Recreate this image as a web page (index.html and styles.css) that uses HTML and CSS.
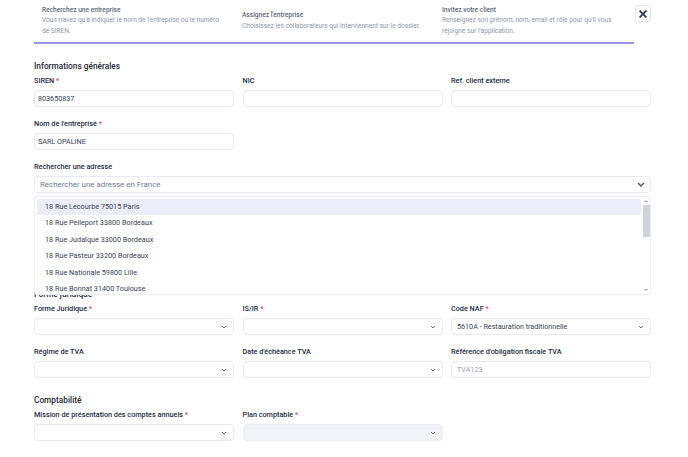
FILE: index.html
```html
<!DOCTYPE html>
<html lang="fr">
<head>
<meta charset="utf-8">
<title>Nouvelle entreprise</title>
<link rel="stylesheet" href="styles.css">
</head>
<body>
<div class="page">
  <header class="top">
    <div class="steps">
      <div class="step">
        <div class="step-title">Recherchez une entreprise</div>
        <div class="step-desc">Vous n'avez qu'à indiquer le nom de l'entreprise ou le numéro<br>de SIREN.</div>
      </div>
      <div class="step">
        <div class="step-title">Assignez l'entreprise</div>
        <div class="step-desc">Choisissez les collaborateurs qui interviennent sur le dossier.</div>
      </div>
      <div class="step">
        <div class="step-title">Invitez votre client</div>
        <div class="step-desc">Renseignez son prénom, nom, email et rôle pour qu'il vous rejoigne sur l'application.</div>
      </div>
    </div>
    <button class="close" type="button" aria-label="Fermer">
      <svg width="8" height="8" viewBox="0 0 8 8"><path d="M1.2 1.2L6.8 6.8M6.8 1.2L1.2 6.8" stroke="#2e3850" stroke-width="1.8" stroke-linecap="square"/></svg>
    </button>
  </header>

  <main class="form">
    <section class="section">
      <h2 class="section-title">Informations générales</h2>
      <div class="grid">
        <div class="field">
          <label class="label">SIREN <span class="req">*</span></label>
          <div class="input filled">803650837</div>
        </div>
        <div class="field">
          <label class="label">NIC</label>
          <div class="input"></div>
        </div>
        <div class="field">
          <label class="label">Ref. client externe</label>
          <div class="input"></div>
        </div>
        <div class="field">
          <label class="label">Nom de l'entreprise <span class="req">*</span></label>
          <div class="input filled">SARL OPALINE</div>
        </div>
        <div class="field full search">
          <label class="label">Rechercher une adresse</label>
          <div class="input select search-input">
            <span class="placeholder search-ph">Rechercher une adresse en France</span>
            <svg class="chev-big" width="8" height="5" viewBox="0 0 8 5"><path d="M1 1L4 4L7 1" fill="none" stroke="#4b5563" stroke-width="1.4"/></svg>
          </div>
          <div class="dropdown">
            <div class="options">
              <div class="option active">18 Rue Lecourbe 75015 Paris</div>
              <div class="option">18 Rue Pelleport 33800 Bordeaux</div>
              <div class="option">18 Rue Judaïque 33000 Bordeaux</div>
              <div class="option">18 Rue Pasteur 33200 Bordeaux</div>
              <div class="option">18 Rue Nationale 59800 Lille</div>
              <div class="option">18 Rue Bonnat 31400 Toulouse</div>
              <div class="option">18 Rue Lafayette 75009 Paris</div>
            </div>
            <div class="scrollbar">
              <span class="arrow up"></span>
              <div class="track"><div class="thumb"></div></div>
              <span class="arrow down"></span>
            </div>
          </div>
        </div>
        <div class="field full">
          <label class="label">Adresse</label>
          <div class="input tall"></div>
        </div>
      </div>
    </section>

    <section class="section">
      <h2 class="section-title">Forme juridique</h2>
      <div class="grid">
        <div class="field">
          <label class="label">Forme Juridique <span class="req">*</span></label>
          <div class="input select"><span></span><svg class="chev" width="6" height="4" viewBox="0 0 6 4"><path d="M1 1L3 3L5 1" fill="none" stroke="#6b7280" stroke-width="1"/></svg></div>
        </div>
        <div class="field">
          <label class="label">IS/IR <span class="req">*</span></label>
          <div class="input select"><span></span><svg class="chev" width="6" height="4" viewBox="0 0 6 4"><path d="M1 1L3 3L5 1" fill="none" stroke="#6b7280" stroke-width="1"/></svg></div>
        </div>
        <div class="field">
          <label class="label">Code NAF <span class="req">*</span></label>
          <div class="input select"><span>5610A - Restauration traditionnelle</span><svg class="chev" width="6" height="4" viewBox="0 0 6 4"><path d="M1 1L3 3L5 1" fill="none" stroke="#6b7280" stroke-width="1"/></svg></div>
        </div>
        <div class="field">
          <label class="label">Régime de TVA</label>
          <div class="input select"><span></span><svg class="chev" width="6" height="4" viewBox="0 0 6 4"><path d="M1 1L3 3L5 1" fill="none" stroke="#6b7280" stroke-width="1"/></svg></div>
        </div>
        <div class="field">
          <label class="label">Date d'échéance TVA</label>
          <div class="input select"><span></span><svg class="chev" width="6" height="4" viewBox="0 0 6 4"><path d="M1 1L3 3L5 1" fill="none" stroke="#6b7280" stroke-width="1"/></svg></div>
        </div>
        <div class="field">
          <label class="label">Référence d'obligation fiscale TVA</label>
          <div class="input"><span class="placeholder light">TVA123</span></div>
        </div>
      </div>
    </section>

    <section class="section">
      <h2 class="section-title">Comptabilité</h2>
      <div class="grid">
        <div class="field">
          <label class="label">Mission de présentation des comptes annuels <span class="req">*</span></label>
          <div class="input select"><span></span><svg class="chev" width="6" height="4" viewBox="0 0 6 4"><path d="M1 1L3 3L5 1" fill="none" stroke="#6b7280" stroke-width="1"/></svg></div>
        </div>
        <div class="field">
          <label class="label">Plan comptable <span class="req">*</span></label>
          <div class="input select disabled"><span></span><svg class="chev" width="6" height="4" viewBox="0 0 6 4"><path d="M1 1L3 3L5 1" fill="none" stroke="#6b7280" stroke-width="1"/></svg></div>
        </div>
      </div>
    </section>
  </main>
</div>
</body>
</html>
```

FILE: styles.css
```css
* { box-sizing: border-box; }

html, body {
  margin: 0;
  padding: 0;
  background: #ffffff;
}

body {
  font-family: Roboto, "Liberation Sans", sans-serif;
  color: #1f2937;
  width: 688px;
  height: 457px;
  overflow: hidden;
}

.page {
  padding: 0 37px 0 34px;
}

/* Header / steps */
.top {
  display: flex;
  align-items: flex-start;
}

.steps {
  display: flex;
  width: 600px;
  height: 44px;
  border-bottom: 2px solid #9598e6;
  padding-bottom: 1px;
  align-items: center;
}

.step {
  width: 200px;
  padding: 0 8px;
}

.step-title {
  font-size: 6.6px;
  line-height: 10.5px;
  font-weight: 500;
  color: #5f6878;
}

.step-desc {
  font-size: 6.6px;
  line-height: 10.5px;
  color: #8e96a7;
}

.close {
  margin: 5px 0 0 1px;
  width: 17px;
  height: 17px;
  padding: 0;
  border: 1px solid #e4e6eb;
  border-radius: 3px;
  background: #ffffff;
  display: flex;
  align-items: center;
  justify-content: center;
}

/* Form */
.section {
  margin-top: 16px;
}

.section-title {
  margin: 0 0 3px;
  font-size: 8.3px;
  line-height: 12px;
  font-weight: 500;
  color: #1f2937;
}

.grid {
  display: grid;
  grid-template-columns: 200px 200px 200px;
  column-gap: 8.5px;
  row-gap: 11px;
}

.field {
  display: flex;
  flex-direction: column;
  min-width: 0;
}

.field.full {
  grid-column: 1 / -1;
}

.field:nth-child(4):not(.full) {
  grid-column: 1;
}

.label {
  font-size: 7.25px;
  line-height: 10px;
  font-weight: 500;
  color: #222b40;
  margin: 1px 0 4px;
  white-space: nowrap;
}

.req {
  color: #e5484d;
}

.input {
  height: 17px;
  border: 1px solid #e8eaf0;
  border-radius: 4px;
  padding: 0 5px;
  display: flex;
  align-items: center;
  font-size: 7.2px;
  color: #374151;
  background: #ffffff;
}

.input.filled {
  padding-left: 3px;
}

.input.tall {
  height: 53px;
}

.select {
  justify-content: space-between;
  padding-right: 6px;
}

.select.disabled {
  background: #f1f3f8;
  border-color: #eceef4;
}

.chev {
  flex: none;
}

.chev-big {
  flex: none;
  margin-right: -1px;
}

.placeholder {
  color: #6f7a8e;
}

.search-ph {
  font-size: 7.9px;
}

.placeholder.light {
  color: #9ca3af;
}

/* Address search dropdown */
.search {
  position: relative;
}

.dropdown {
  position: absolute;
  z-index: 10;
  left: 0;
  right: 0;
  top: calc(100% + 3px);
  height: 99px;
  background: #ffffff;
  border: 1px solid #eceef3;
  border-radius: 3px;
  display: flex;
  overflow: hidden;
}

.options {
  flex: 1;
  padding: 2px 2px 0 2px;
  overflow: hidden;
}

.option {
  height: 16.4px;
  line-height: 16.4px;
  padding-left: 8px;
  font-size: 7.25px;
  color: #374151;
  border-radius: 2px;
  white-space: nowrap;
}

.option.active {
  background: #ededfa;
}

.scrollbar {
  width: 7px;
  margin-right: 0.5px;
  display: flex;
  flex-direction: column;
  align-items: center;
}

.arrow {
  width: 0;
  height: 0;
  border-left: 2px solid transparent;
  border-right: 2px solid transparent;
  margin: 3px 0;
}

.arrow.up {
  border-bottom: 2px solid #a3a7ae;
}

.arrow.down {
  border-top: 2px solid #a3a7ae;
}

.track {
  flex: 1;
  width: 7px;
}

.thumb {
  width: 7px;
  height: 32px;
  background: #cfd2d8;
}
```
